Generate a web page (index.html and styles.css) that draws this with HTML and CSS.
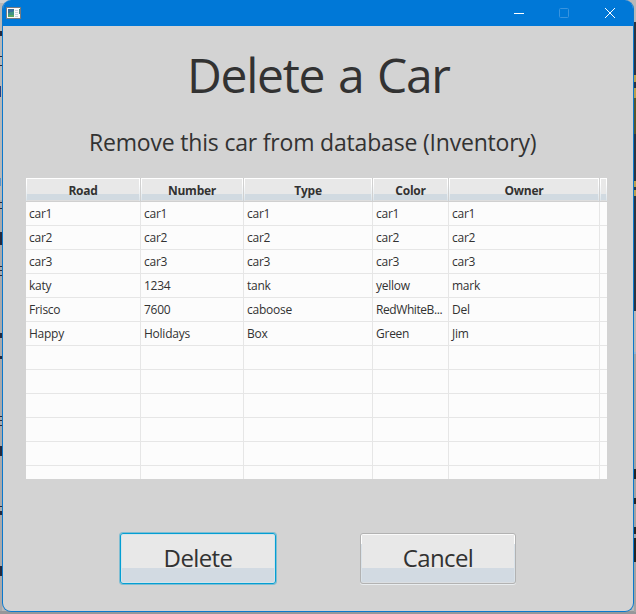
FILE: index.html
```html
<!DOCTYPE html>
<html lang="en">
<head>
<meta charset="utf-8">
<title>Delete a Car</title>
<link rel="stylesheet" href="styles.css">
</head>
<body>
<svg class="backdrop" width="636" height="614" viewBox="0 0 636 614" shape-rendering="crispEdges" aria-hidden="true">
  <rect width="636" height="614" fill="#b8b8b8"/>
  <rect width="12" height="3" fill="#d0d0d0"/>
  <rect y="200" width="2" height="414" fill="#a9a9ab"/>
  <rect y="611" width="636" height="3" fill="#97979a"/>
  <path fill="#262a3c" d="M0 31h2v5H0zM0 56h2v1H0zM0 65h2v1H0zM0 202h2v1H0zM0 208h2v1H0zM0 232h2v13H0zM0 266h2v1H0zM0 270h2v1H0zM0 275h2v1H0zM0 333h2v5H0zM0 356h2v3H0zM0 416h2v1H0zM0 420h2v1H0zM0 425h2v1H0zM0 446h2v10H0zM0 506h2v1H0zM0 511h2v4H0zM0 566h2v10H0z"/>
  <path fill="#243f83" d="M0 86h1v11H0z"/>
  <path fill="#5f94c5" d="M0 178h1v8H0z"/>
  <rect x="634" y="22" width="2" height="289" fill="#2c3340"/>
  <path fill="#b9a04e" d="M634 75h2v7h-2zM634 88h2v10h-2zM634 181h2v6h-2zM634 190h2v6h-2z"/>
  <path fill="#57572c" d="M634 98h2v36h-2z"/>
  <rect x="634" y="311" width="2" height="160" fill="#b9b6b7"/>
  <path fill="#9db4cc" d="M634 352h2v2h-2z"/>
  <rect x="634" y="354" width="2" height="258" fill="#a3a3a4"/>
  <path fill="#242424" d="M634 469h2v10h-2zM634 498h2v6h-2zM634 527h2v7h-2zM634 538h2v24h-2z"/>
</svg>
<main class="window">
  <header class="titlebar">
    <svg class="app-icon" width="15" height="12" viewBox="0 0 15 12" shape-rendering="crispEdges" aria-hidden="true">
      <rect width="15" height="12" fill="#777b80"/>
      <rect x="1" y="1" width="13" height="10" fill="#fafafa"/>
      <rect x="2" y="2" width="6" height="8" fill="#3e9382"/>
      <path d="M2 2h6v2L2 6z" fill="#376f9b"/>
      <path d="M4 8h4v2H2V9z" fill="#5ba660"/>
      <path d="M9 3h3v1H9zM9 5h3v1H9zM9 7h3v1H9zM9 9h3v1H9z" fill="#c7d3dd"/>
      <path d="M13 2h1v5h-1z" fill="#4b8b80"/>
    </svg>
    <div class="controls">
      <svg width="10" height="10" viewBox="0 0 10 10"><path d="M0 5.5h10" stroke="#fff" fill="none"/></svg>
      <svg width="10" height="10" viewBox="0 0 10 10"><rect x=".5" y=".5" width="9" height="9" rx="1" stroke="#3994df" fill="none"/></svg>
      <svg class="close" width="10" height="10" viewBox="0 0 10 10"><path d="M0 0l10 10M10 0L0 10" stroke="#fff" fill="none"/></svg>
    </div>
  </header>
  <h1 class="title">Delete a Car</h1>
  <p class="subtitle">Remove this car from database (Inventory)</p>
  <div class="table">
    <div class="row head"><span>Road</span><span>Number</span><span>Type</span><span>Color</span><span>Owner</span><span></span></div>
    <div class="row"><span>car1</span><span>car1</span><span>car1</span><span>car1</span><span>car1</span><span></span></div>
    <div class="row"><span>car2</span><span>car2</span><span>car2</span><span>car2</span><span>car2</span><span></span></div>
    <div class="row"><span>car3</span><span>car3</span><span>car3</span><span>car3</span><span>car3</span><span></span></div>
    <div class="row"><span>katy</span><span>1234</span><span>tank</span><span>yellow</span><span>mark</span><span></span></div>
    <div class="row"><span>Frisco</span><span>7600</span><span>caboose</span><span class="tight">RedWhiteB...</span><span>Del</span><span></span></div>
    <div class="row"><span>Happy</span><span>Holidays</span><span>Box</span><span>Green</span><span>Jim</span><span></span></div>
    <div class="row"><span></span><span></span><span></span><span></span><span></span><span></span></div>
    <div class="row"><span></span><span></span><span></span><span></span><span></span><span></span></div>
    <div class="row"><span></span><span></span><span></span><span></span><span></span><span></span></div>
    <div class="row"><span></span><span></span><span></span><span></span><span></span><span></span></div>
    <div class="row"><span></span><span></span><span></span><span></span><span></span><span></span></div>
    <div class="row"><span></span><span></span><span></span><span></span><span></span><span></span></div>
  </div>
  <div class="actions">
    <button class="btn focused"><span>Delete</span></button>
    <button class="btn"><span>Cancel</span></button>
  </div>
</main>
</body>
</html>
```
FILE: styles.css
```css
* { box-sizing: border-box; }
body {
  margin: 0;
  width: 636px;
  height: 614px;
  overflow: hidden;
  font-family: "Open Sans", "Noto Sans", sans-serif;
  color: #323232;
}
.backdrop { position: absolute; z-index: -1; display: block; }
.window {
  width: 632px;
  height: 612px;
  margin-left: 2px;
  border: 1px solid #0a78cd;
  border-top: 0;
  border-radius: 9px;
  background: #d3d3d3;
  overflow: hidden;
}
.titlebar {
  height: 26px;
  background: #0078d7;
  display: flex;
  justify-content: space-between;
  padding: 7px 18px 0 3px;
}
.controls { display: flex; gap: 35px; padding-top: 1px; }
.controls svg { display: block; }
.controls .close { margin-left: 1px; }
.title {
  margin: 14px 0 0 184px;
  height: 70px;
  line-height: 70px;
  font-size: 48px;
  font-weight: 400;
  letter-spacing: -1.3px;
  word-spacing: 2.6px;
  white-space: nowrap;
}
.subtitle {
  margin: 14px 0 0 86px;
  height: 36px;
  line-height: 36px;
  font-size: 23px;
  letter-spacing: -.19px;
  white-space: nowrap;
}
.table {
  width: 581px;
  height: 301px;
  margin: 18px 0 0 23px;
  background: #fcfcfc;
  overflow: hidden;
  font-size: 12px;
  letter-spacing: -.25px;
}
.row {
  display: grid;
  grid-template-columns: 115px 103px 129px 76px 151px 7px;
  height: 24px;
}
.row span {
  border-right: 1px solid #e6e6e6;
  border-bottom: 1px solid #e6e6e6;
  padding-left: 3px;
  line-height: 23px;
  white-space: nowrap;
  overflow: hidden;
}
.row .tight { letter-spacing: -.42px; }
.row span:last-child { border-right: 0; }
.row.head span {
  padding: 0;
  text-align: center;
  font-weight: 700;
  line-height: 25px;
  border-color: #d0d0d0;
  background:
    linear-gradient(#fff, #fff) 0 0 / 100% 1px no-repeat,
    linear-gradient(#fff 25%, #dbe4ea) 0 0 / 1px 100% no-repeat,
    linear-gradient(#fff 25%, #dbe4ea) 100% 0 / 1px 100% no-repeat,
    linear-gradient(#dedede, #dedede) 0 100% / 100% 1px no-repeat,
    linear-gradient(#e8e8e8 16px, #d1dae1 16px);
  background-origin: padding-box;
  background-clip: padding-box;
}
.actions { display: flex; gap: 84px; margin: 54px 0 0 117px; }
.btn {
  width: 156px;
  height: 51px;
  padding: 0;
  border: 1px solid #b2b2b2;
  border-radius: 3px;
  font: 24px/48px "Open Sans", "Noto Sans", sans-serif;
  letter-spacing: -.6px;
  color: #323232;
  box-shadow: 0 1px 0 #e9edf0;
  background:
    linear-gradient(#fafafa, #fafafa) 0 0 / 100% 1px no-repeat,
    linear-gradient(#fff 20%, #d9e2e9 21%) 0 0 / 1px 100% no-repeat,
    linear-gradient(#fff 20%, #d9e2e9 21%) 100% 0 / 1px 100% no-repeat,
    linear-gradient(#e8e8e8 34px, #d2dae2 34px 48px, #dcdfe2 48px);
  background-origin: padding-box;
}
.btn span { display: block; height: 49px; white-space: nowrap; }
.btn.focused {
  border-color: #039ed3;
  box-shadow: 0 0 0 1px rgba(3, 158, 211, .4), inset 0 0 0 1px #d3e4ea;
}
```
